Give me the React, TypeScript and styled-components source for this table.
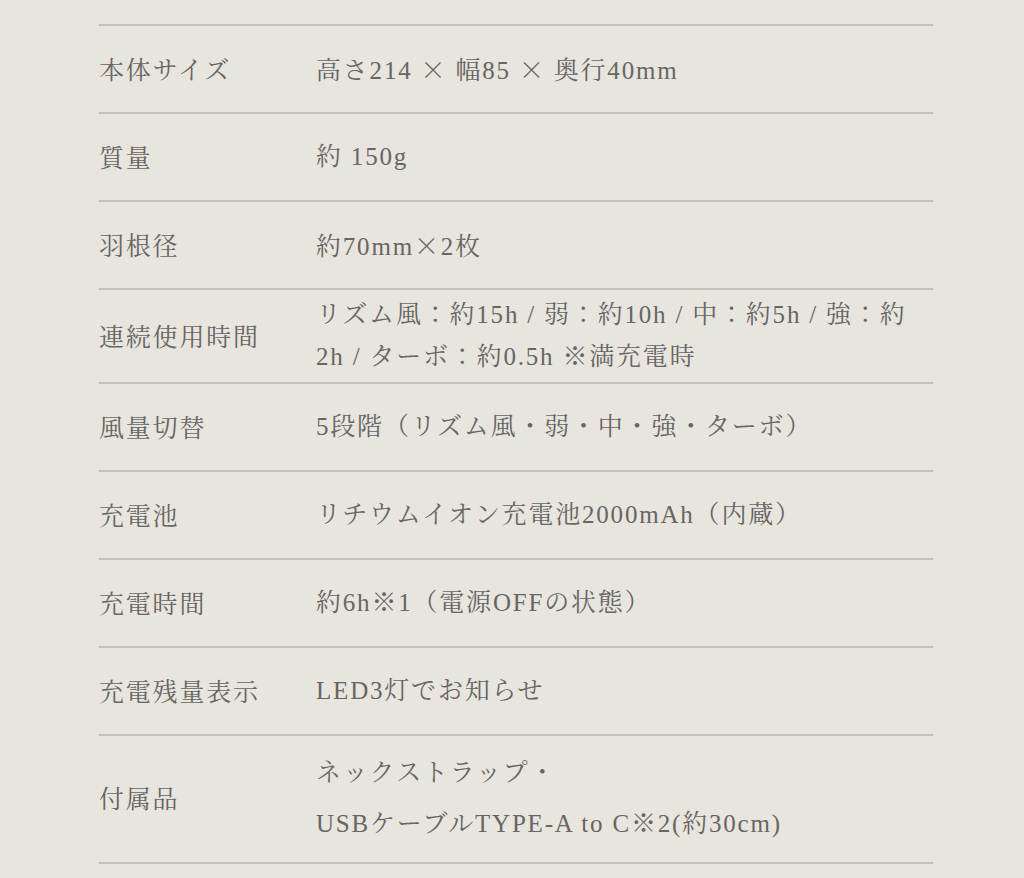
import React from 'react';
import styled, { createGlobalStyle } from 'styled-components';

const GlobalStyle = createGlobalStyle`
  html, body {
    margin: 0;
    padding: 0;
    background: #e8e4de;
  }
  body {
    font-family: "Liberation Serif", "Noto Serif CJK JP", "Noto Sans CJK JP", serif;
  }
`;

const Page = styled.div`
  width: 1024px;
  height: 878px;
  overflow: hidden;
  background: #e8e4de;
  padding-top: 24px;
  box-sizing: border-box;
`;

const Table = styled.div`
  margin-left: 99px;
  width: 834px;
  border-top: 2px solid #c4c0ba;
`;

const Row = styled.div<{ $tall?: boolean }>`
  display: grid;
  grid-template-columns: 217px 1fr;
  align-items: center;
  min-height: 86px;
  padding: ${(p) => (p.$tall ? '12px 0 13px' : '0')};
  border-bottom: 2px solid #c4c0ba;
  color: #666664;
  font-size: 25px;
  letter-spacing: 1.8px;
`;

const Label = styled.div`
  line-height: 42px;
  padding-top: 3px;
`;

const Value = styled.div<{ $gap?: number }>`
  display: flex;
  flex-direction: column;
  gap: ${(p) => p.$gap ?? 0}px;
  line-height: 42px;
  padding: 4px 0;
`;

// full-width multiplication sign as drawn by the Japanese font
const Times = styled.span`
  font-family: "Noto Sans CJK JP", sans-serif;
  font-weight: 300;
`;

type Spec = { label: string; lines: React.ReactNode[]; gap?: number; tall?: boolean };

const specs: Spec[] = [
  {
    label: '本体サイズ',
    lines: [
      <>
        高さ214 <Times>×</Times> 幅85 <Times>×</Times> 奥行40mm
      </>,
    ],
  },
  { label: '質量', lines: ['約 150g'] },
  {
    label: '羽根径',
    lines: [
      <>
        約70mm<Times>×</Times>2枚
      </>,
    ],
  },
  {
    label: '連続使用時間',
    lines: ['リズム風：約15h / 弱：約10h / 中：約5h / 強：約', '2h / ターボ：約0.5h ※満充電時'],
  },
  { label: '風量切替', lines: ['5段階（リズム風・弱・中・強・ターボ）'] },
  { label: '充電池', lines: ['リチウムイオン充電池2000mAh（内蔵）'] },
  { label: '充電時間', lines: ['約6h※1（電源OFFの状態）'] },
  { label: '充電残量表示', lines: ['LED3灯でお知らせ'] },
  {
    label: '付属品',
    lines: ['ネックストラップ・', 'USBケーブルTYPE-A to C※2(約30cm)'],
    gap: 9,
    tall: true,
  },
];

export default function App() {
  return (
    <Page>
      <GlobalStyle />
      <Table>
        {specs.map((s) => (
          <Row key={s.label} $tall={s.tall}>
            <Label>{s.label}</Label>
            <Value $gap={s.gap}>
              {s.lines.map((l, i) => (
                <span key={i}>{l}</span>
              ))}
            </Value>
          </Row>
        ))}
      </Table>
    </Page>
  );
}
